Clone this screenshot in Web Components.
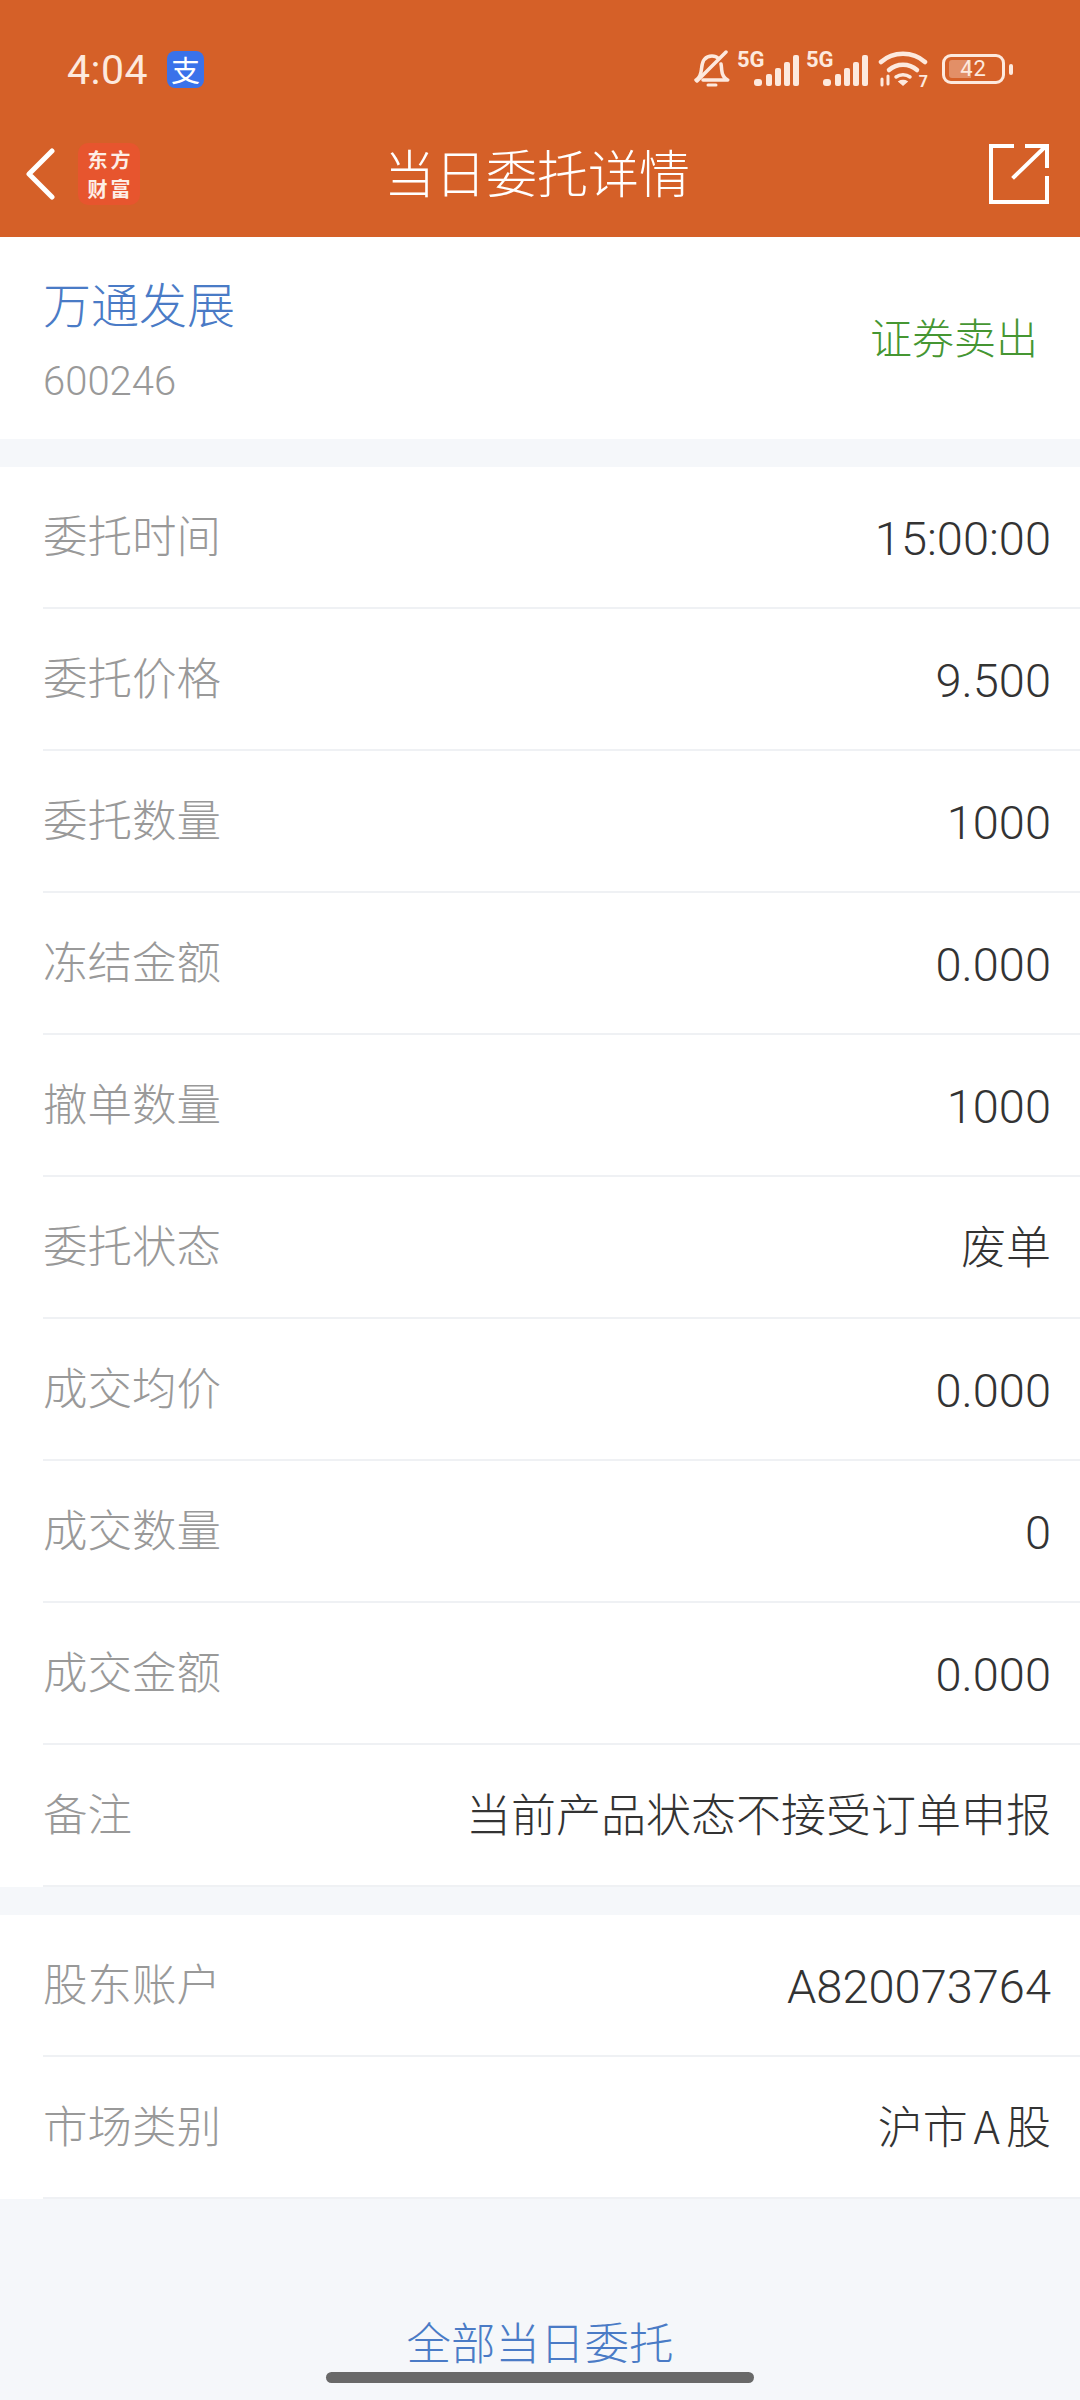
<!DOCTYPE html>
<html lang="zh">
<head>
<meta charset="utf-8">
<style>
   html, body { margin: 0; padding: 0; }
   body { width: 1080px; height: 2400px; overflow: hidden; background: #f5f7fa; font-family: Roboto, "Noto Sans CJK SC", sans-serif; }
</style>
</head>
<body>
<order-page>
   <status-bar></status-bar>
   <nav-bar>当日委托详情</nav-bar>
   <stock-card name="万通发展" code="600246" side="证券卖出"></stock-card>
   <detail-group>
      <detail-row label="委托时间" num>15:00:00</detail-row>
      <detail-row label="委托价格" num>9.500</detail-row>
      <detail-row label="委托数量" num>1000</detail-row>
      <detail-row label="冻结金额" num>0.000</detail-row>
      <detail-row label="撤单数量" num>1000</detail-row>
      <detail-row label="委托状态">废单</detail-row>
      <detail-row label="成交均价" num>0.000</detail-row>
      <detail-row label="成交数量" num>0</detail-row>
      <detail-row label="成交金额" num>0.000</detail-row>
      <detail-row label="备注">当前产品状态不接受订单申报</detail-row>
   </detail-group>
   <detail-group>
      <detail-row label="股东账户" num>A820073764</detail-row>
      <detail-row label="市场类别">沪市 A 股</detail-row>
   </detail-group>
   <all-orders>全部当日委托</all-orders>
   <home-bar></home-bar>
</order-page>

<script>
class OrderPage extends HTMLElement
{
   connectedCallback()
   {
      const shadow_root = this.attachShadow({ mode: 'open' });
      shadow_root.innerHTML = `
         <style>
            :host { display: flex; flex-direction: column; position: relative; width: 1080px; height: 2400px; overflow: hidden; background: #f5f7fa; }
         </style>
         <slot></slot>
      `;
   }
}

class StatusBar extends HTMLElement
{
   connectedCallback()
   {
      const shadow_root = this.attachShadow({ mode: 'open' });
      const bars = `<svg width="46" height="32" viewBox="0 0 46 32" fill="#fde9de"><rect x="0" y="24" width="8" height="7" rx="3"/><rect x="12" y="19" width="6" height="12" rx="2"/><rect x="21" y="13" width="6" height="18" rx="2"/><rect x="30" y="7" width="6" height="24" rx="2"/><rect x="39" y="0" width="6" height="31" rx="2"/></svg>`;
      shadow_root.innerHTML = `
         <style>
            :host { display: flex; align-items: center; height: 110px; padding: 28px 67px 0 67px; box-sizing: border-box; background: #d56028; color: #fde9de; }
            .time { font: 400 41px/1 Roboto, sans-serif; padding-top: 2px; letter-spacing: 0.5px; }
            .pay { display: flex; align-items: center; justify-content: center; width: 37px; height: 37px; margin-left: 19px; border-radius: 8px; background: #3a72ea; color: #fff; font: 400 29px/1 "Noto Sans CJK SC", sans-serif; }
            .icons { display: flex; align-items: center; margin-left: auto; }
            .net { position: relative; width: 69px; height: 40px; }
            .net b { position: absolute; left: 0; top: 0; font: 700 22px/1 Roboto, sans-serif; }
            .net svg { position: absolute; left: 17px; top: 6px; }
            .bat { display: flex; align-items: center; justify-content: center; position: relative; width: 63px; height: 30px; margin-left: 14px; box-sizing: border-box; border: 3px solid #fde9de; border-radius: 9px; font: 400 22px/1 Roboto, sans-serif; letter-spacing: 1px; }
            .bat::before { content: ""; position: absolute; left: 4px; top: 3px; bottom: 3px; width: 22px; border-radius: 3px 0 0 3px; background: rgba(253, 233, 222, 0.35); }
            .bat span { position: relative; }
            .nub { width: 4px; height: 11px; margin-left: 4px; border-radius: 2px; background: #fde9de; }
            .wifi { position: relative; width: 50px; height: 38px; margin-left: 3px; }
            .wifi i { position: absolute; right: 0; bottom: -2px; font: 700 16px/1 Roboto, sans-serif; }
         </style>
         <span class="time">4:04</span>
         <span class="pay">支</span>
         <div class="icons">
            <svg width="36" height="38" viewBox="0 0 36 38" fill="none" stroke="#fde9de" stroke-width="3.500" stroke-linecap="round" stroke-linejoin="round" style="margin-right:7px">
               <path d="M2 30c4-2 5-6 5.500-11C8 11 11 6 18 6c3 0 5 1 6.500 2.500"/>
               <path d="M27 14c.5 2 .5 4 .7 6 .4 5 2 8 6 10H9"/>
               <path d="M32 2 3 31"/>
               <path d="M14 35h8" stroke-width="3"/>
            </svg>
            <div class="net"><b>5G</b>${bars}</div>
            <div class="net"><b>5G</b>${bars}</div>
            <div class="wifi">
               <svg width="50" height="38" viewBox="0 0 50 38" fill="none" stroke="#fde9de" stroke-width="4.500" stroke-linecap="round">
                  <path d="M3 12C15 1 35 1 47 12"/>
                  <path d="M11 20c8-7 20-7 28 0"/>
                  <path d="M18 27c4-3 10-3 14 0" stroke-width="3.500"/>
                  <path d="M25 35l-4-3.500c2-1.500 6-1.500 8 0z" fill="#fde9de" stroke-width="1.500"/>
                  <path d="M4 29v6M10 26v8" stroke-width="3"/>
               </svg>
               <i>7</i>
            </div>
            <div class="bat"><span>42</span></div>
            <div class="nub"></div>
         </div>
      `;
   }
}

class NavBar extends HTMLElement
{
   connectedCallback()
   {
      const shadow_root = this.attachShadow({ mode: 'open' });
      shadow_root.innerHTML = `
         <style>
            :host { display: grid; grid-template-columns: 1fr auto 1fr; align-items: center; height: 127px; padding: 0 31px 0 25px; box-sizing: border-box; background: #d56028; color: #fff; }
            .left { display: flex; align-items: center; }
            .logo { width: 62px; height: 62px; padding: 2px 0 0 3px; box-sizing: border-box; margin-left: 23px; border-radius: 10px; background: #e7552e; color: #fdeee6; font: 700 20px/29px "Noto Sans CJK SC", sans-serif; letter-spacing: 3px; text-align: center; }
            .title { padding-bottom: 4px; font: 300 51px/1 "Noto Sans CJK SC", sans-serif; white-space: nowrap; }
            .share { justify-self: end; }
         </style>
         <div class="left">
            <svg width="30" height="52" viewBox="0 0 30 52" fill="none" stroke="#fff" stroke-width="5" stroke-linecap="round" stroke-linejoin="round"><path d="M27 3 4 26l23 23"/></svg>
            <div class="logo">东方<br>财富</div>
         </div>
         <div class="title"><slot></slot></div>
         <svg class="share" width="60" height="60" viewBox="0 0 60 60" fill="none" stroke="#fff" stroke-width="4" stroke-linecap="square"><path d="M23 2H2v56h56V34"/><path d="M25 33 57 2M38 2h20v20"/></svg>
      `;
   }
}

class StockCard extends HTMLElement
{
   connectedCallback()
   {
      const shadow_root = this.attachShadow({ mode: 'open' });
      shadow_root.innerHTML = `
         <style>
            :host { display: flex; align-items: center; justify-content: space-between; height: 202px; padding: 0 42px 0 43px; box-sizing: border-box; background: #fff; }
            .info { padding-bottom: 4px; }
            .name { font: 300 48px/68px "Noto Sans CJK SC", sans-serif; color: #4a7bc6; }
            .code { margin-top: 23px; font: 300 40px/46px Roboto, sans-serif; color: #999; }
            .side { padding-bottom: 4px; font: 300 42px/1 "Noto Sans CJK SC", sans-serif; color: #459632; }
         </style>
         <div class="info">
            <div class="name">${this.getAttribute('name')}</div>
            <div class="code">${this.getAttribute('code')}</div>
         </div>
         <div class="side">${this.getAttribute('side')}</div>
      `;
   }
}

class DetailGroup extends HTMLElement
{
   connectedCallback()
   {
      const shadow_root = this.attachShadow({ mode: 'open' });
      shadow_root.innerHTML = `
         <style>
            :host { display: block; margin-top: 28px; background: #fff; }
         </style>
         <slot></slot>
      `;
   }
}

class DetailRow extends HTMLElement
{
   connectedCallback()
   {
      const shadow_root = this.attachShadow({ mode: 'open' });
      shadow_root.innerHTML = `
         <style>
            :host { display: block; padding-left: 43px; }
            .row { display: flex; align-items: center; justify-content: space-between; height: 142px; padding-right: 29px; box-sizing: border-box; border-bottom: 2px solid #eff1f4; }
            .label { padding-bottom: 5px; font: 300 44.500px/1 "Noto Sans CJK SC", sans-serif; color: #999; }
            .value { padding-bottom: 5px; font: 300 45px/1 "Noto Sans CJK SC", sans-serif; word-spacing: -4px; color: #333; white-space: nowrap; }
            :host([num]) .value { padding: 2px 0 0; font: 300 47px/1 Roboto, sans-serif; word-spacing: 0; }
         </style>
         <div class="row">
            <span class="label">${this.getAttribute('label')}</span>
            <span class="value"><slot></slot></span>
         </div>
      `;
   }
}

class AllOrders extends HTMLElement
{
   connectedCallback()
   {
      const shadow_root = this.attachShadow({ mode: 'open' });
      shadow_root.innerHTML = `
         <style>
            :host { display: block; padding-top: 116px; text-align: center; font: 300 44.500px/52px "Noto Sans CJK SC", sans-serif; color: #4a7bc6; }
         </style>
         <slot></slot>
      `;
   }
}

class HomeBar extends HTMLElement
{
   connectedCallback()
   {
      const shadow_root = this.attachShadow({ mode: 'open' });
      shadow_root.innerHTML = `
         <style>
            :host { display: block; position: absolute; left: 326px; top: 2372px; width: 428px; height: 11px; border-radius: 6px; background: #696969; }
         </style>
      `;
   }
}

customElements.define('order-page', OrderPage);
customElements.define('status-bar', StatusBar);
customElements.define('nav-bar', NavBar);
customElements.define('stock-card', StockCard);
customElements.define('detail-group', DetailGroup);
customElements.define('detail-row', DetailRow);
customElements.define('all-orders', AllOrders);
customElements.define('home-bar', HomeBar);
</script>
</body>
</html>
